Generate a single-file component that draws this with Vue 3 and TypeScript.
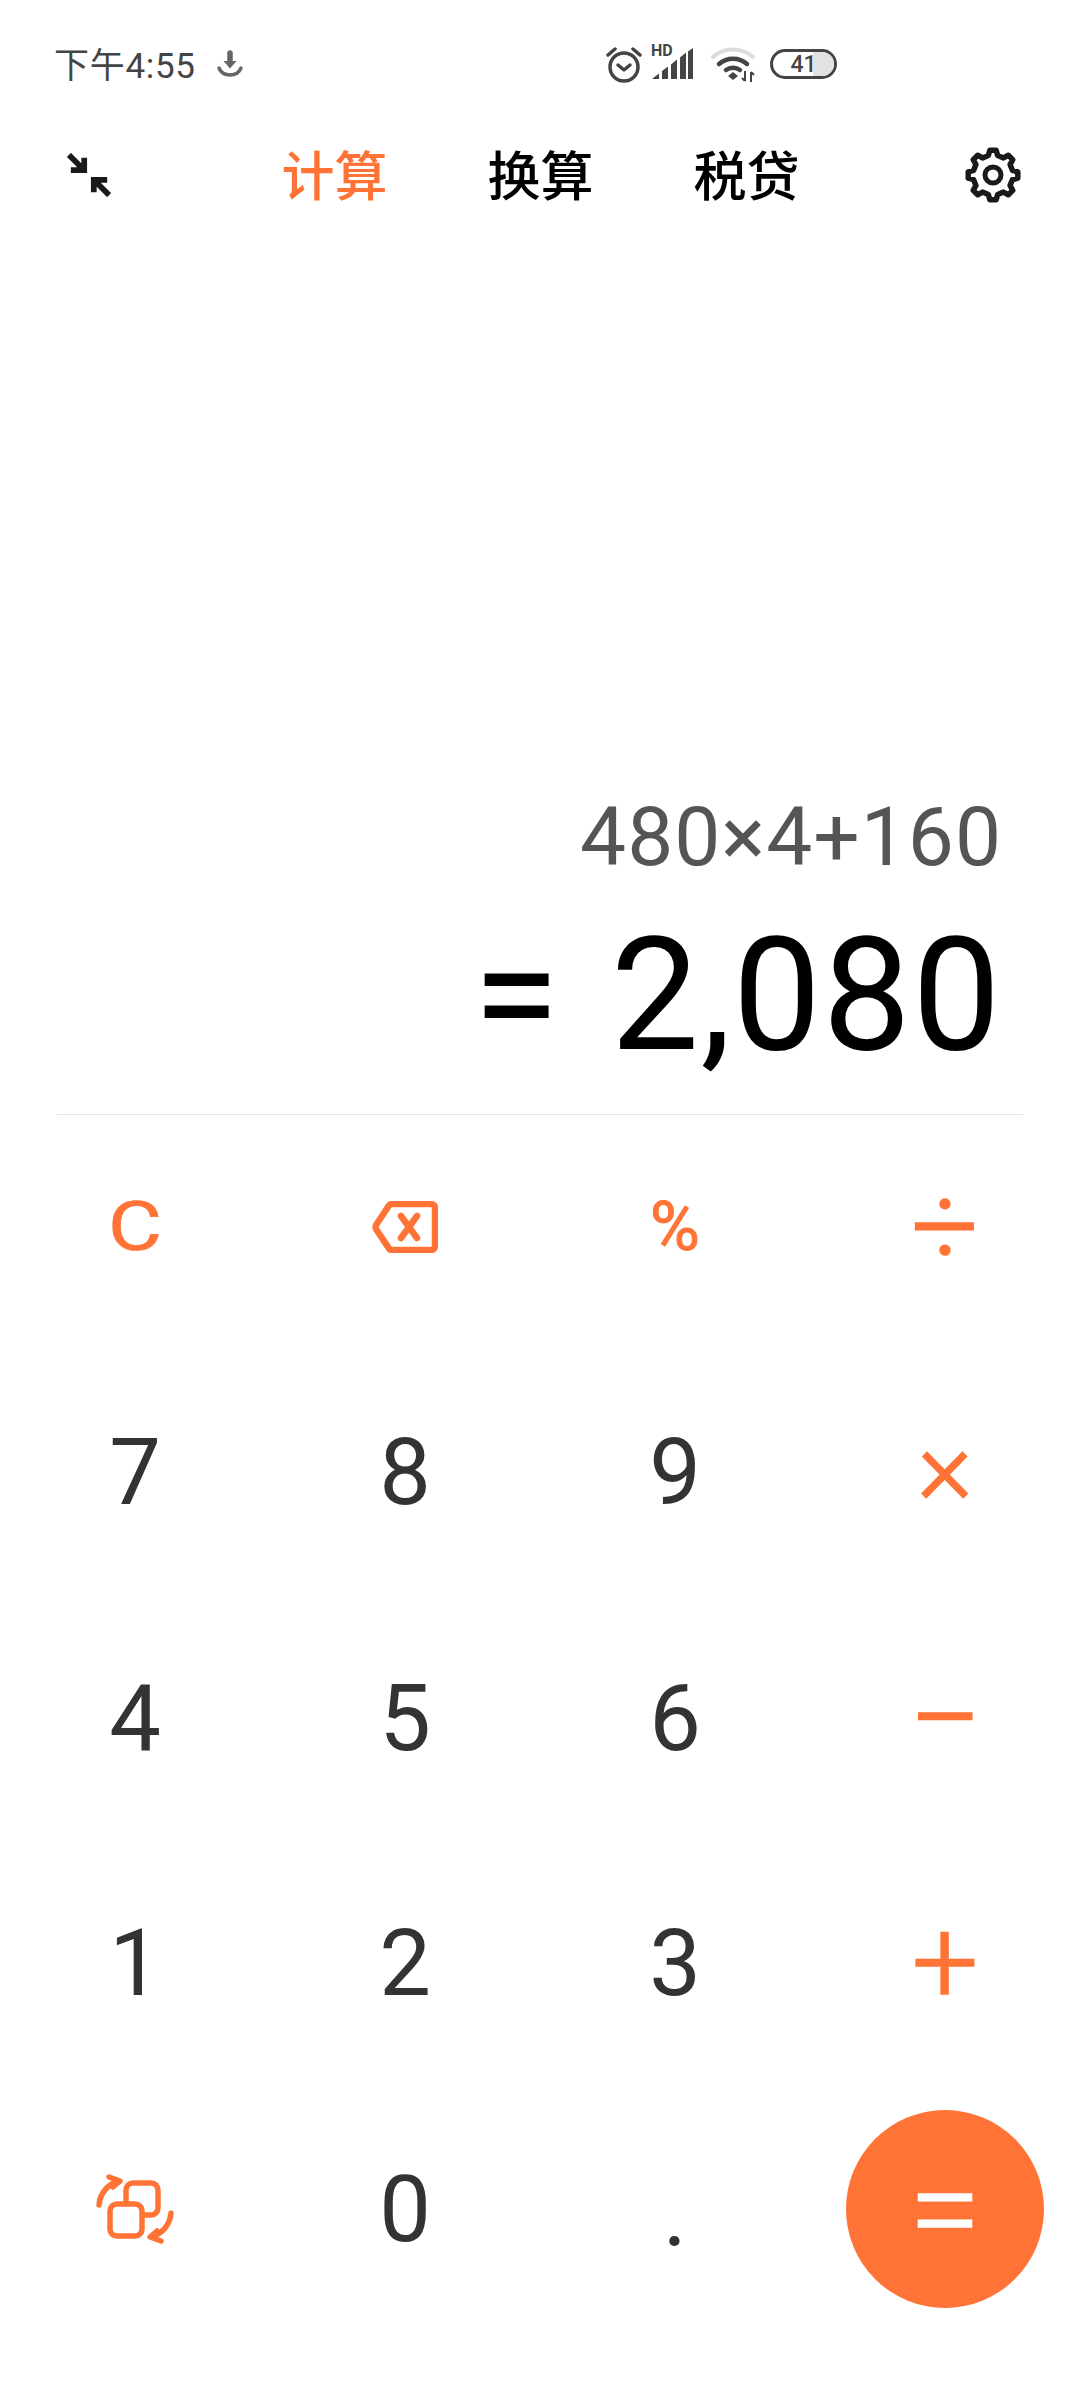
<template>
  <div class="screen">
    <!-- 状态栏 -->
    <div class="status">
      <div class="status-left">
        <span class="clock">下午4:55</span>
        <svg class="dl" viewBox="0 0 28 28" width="28" height="28" aria-hidden="true">
          <path d="M14 3v9" stroke="#666" stroke-width="5.500" fill="none" stroke-linecap="round" />
          <path d="M7.500 11h13L14 18.500z" fill="#666" />
          <path d="M3 18c2 5 6 7 11 7s9-2 11-7" stroke="#666" stroke-width="3.500" fill="none" stroke-linecap="round" />
        </svg>
      </div>
      <div class="status-right">
        <svg viewBox="0 0 36 38" width="36" height="38" aria-hidden="true">
          <circle cx="18" cy="22" r="14" stroke="#444" stroke-width="3.500" fill="none" />
          <path d="M12 20l6 5 6-5" stroke="#444" stroke-width="3.500" fill="none" stroke-linecap="round" stroke-linejoin="round" />
          <path d="M2 10l7-6M34 10l-7-6" stroke="#444" stroke-width="3.500" fill="none" stroke-linecap="round" />
        </svg>
        <div class="signal">
          <span class="hd">HD</span>
          <svg viewBox="0 0 42 32" width="42" height="32" aria-hidden="true">
            <path d="M1 31l7-5.500V31zM11 23l6-4.500V31h-6zM20 16.500l6-5V31h-6zM29 9.500l6-5V31h-6zM37 3.500L42 0v31h-5z" fill="#444" />
          </svg>
        </div>
        <svg viewBox="0 0 44 38" width="44" height="38" aria-hidden="true">
          <path d="M2 12c11-10 29-10 40 0" stroke="#dcdcdc" stroke-width="4" fill="none" stroke-linecap="round" />
          <path d="M8 19c8-7 20-7 28 0" stroke="#444" stroke-width="4.500" fill="none" stroke-linecap="round" />
          <path d="M15 25c4-3 10-3 14 0" stroke="#444" stroke-width="4.500" fill="none" stroke-linecap="round" />
          <path d="M17 31l5-4 5 4-5 4z" fill="#444" />
          <path d="M34 26v10M31 33l3 3M40 37V27M40 27l3 3" stroke="#444" stroke-width="2" fill="none" />
        </svg>
        <div class="battery">
          <div class="battery-fill"></div>
          <span class="battery-num">41</span>
        </div>
      </div>
    </div>

    <!-- 顶部导航 -->
    <div class="nav">
      <svg class="shrink" viewBox="0 0 46 46" width="44" height="44" aria-hidden="true">
        <path d="M2 2l16 16M18 5v13H4" stroke="#1a1a1a" stroke-width="6" fill="none" />
        <path d="M44 44L28 28M28 41V28h14" stroke="#1a1a1a" stroke-width="6" fill="none" />
      </svg>
      <div class="tabs">
        <span v-for="(t, i) in tabs" :key="t" class="tab" :class="{ active: i === 0 }">{{ t }}</span>
      </div>
      <svg class="gear" viewBox="-30 -30 60 60" width="60" height="60" aria-hidden="true">
        <path :d="gearPath" stroke="#1a1a1a" stroke-width="5.500" stroke-linejoin="round" fill="none" />
        <circle cx="0" cy="0" r="8" stroke="#1a1a1a" stroke-width="5" fill="none" />
      </svg>
    </div>

    <!-- 显示区域 -->
    <div class="display">
      <div class="expr">480×4+160</div>
      <div class="result"><span class="eq">=</span>2,080</div>
    </div>
    <div class="divider"></div>

    <!-- 键盘 -->
    <div class="keypad">
      <div v-for="k in keys" :key="k.label" class="key" :class="k.kind">
        <svg v-if="k.label === 'back'" viewBox="0 0 66 52" width="66" height="52" aria-hidden="true">
          <path d="M20 3h39a4 4 0 0 1 4 4v38a4 4 0 0 1-4 4H20a4 4 0 0 1-3.600-2.400L4 28a5 5 0 0 1 0-4L16.400 5.400A4 4 0 0 1 20 3z" stroke="#ff7436" stroke-width="6.500" fill="none" />
          <path d="M29 15l16 22M45 15L29 37" stroke="#ff7436" stroke-width="6.500" fill="none" stroke-linecap="round" />
        </svg>
        <svg v-else-if="k.label === 'swap'" viewBox="0 0 78 70" width="78" height="70" aria-hidden="true">
          <rect x="30" y="9" width="32" height="32" rx="7" stroke="#ff7436" stroke-width="5.500" fill="none" />
          <rect x="14" y="30" width="32" height="32" rx="7" stroke="#ff7436" stroke-width="5.500" fill="#fff" />
          <path d="M3 31c1-12 9-21 20-24M13 3l11 4-7 6" stroke="#ff7436" stroke-width="5.500" fill="none" stroke-linecap="round" stroke-linejoin="round" />
          <path d="M75 39c-1 12-9 21-20 24M65 67l-11-4 7-6" stroke="#ff7436" stroke-width="5.500" fill="none" stroke-linecap="round" stroke-linejoin="round" />
        </svg>
        <span v-else>{{ k.label }}</span>
      </div>
    </div>
  </div>
</template>

<script setup lang="ts">
interface Key {
  label: string
  kind: string
}

const tabs = ['计算', '换算', '税贷']

const keys: Key[] = [
  { label: 'C', kind: 'op clear' },
  { label: 'back', kind: 'op' },
  { label: '%', kind: 'op percent' },
  { label: '÷', kind: 'op sign divide' },
  { label: '7', kind: 'num' },
  { label: '8', kind: 'num' },
  { label: '9', kind: 'num' },
  { label: '×', kind: 'op sign times' },
  { label: '4', kind: 'num' },
  { label: '5', kind: 'num' },
  { label: '6', kind: 'num' },
  { label: '−', kind: 'op sign minus' },
  { label: '1', kind: 'num' },
  { label: '2', kind: 'num' },
  { label: '3', kind: 'num' },
  { label: '+', kind: 'op sign plus' },
  { label: 'swap', kind: 'op' },
  { label: '0', kind: 'num' },
  { label: '.', kind: 'num dot' },
  { label: '=', kind: 'equals sign' },
]

// 8 teeth, one pointing straight up
function buildGear(teeth: number, outer: number, inner: number) {
  const pts: string[] = []
  const step = (Math.PI * 2) / teeth
  for (let i = 0; i < teeth; i++) {
    const a = i * step - Math.PI / 2
    const corners: [number, number][] = [
      [a - step * 0.3, inner],
      [a - step * 0.16, outer],
      [a + step * 0.16, outer],
      [a + step * 0.3, inner],
    ]
    for (const [ang, r] of corners) {
      pts.push(`${(Math.cos(ang) * r).toFixed(2)} ${(Math.sin(ang) * r).toFixed(2)}`)
    }
  }
  return `M${pts.join('L')}z`
}

const gearPath = buildGear(8, 25, 20)
</script>

<style>
html,
body {
  background: #fff;
}
</style>

<style scoped>
.screen {
  width: 1080px;
  height: 2400px;
  background: #fff;
  display: flex;
  flex-direction: column;
  overflow: hidden;
  font-family: Roboto, 'Noto Sans CJK SC', sans-serif;
}

.status {
  height: 64px;
  margin-top: 32px;
  display: flex;
  align-items: center;
  justify-content: space-between;
  padding: 0 243px 0 54px;
  color: #444;
}
.status-left {
  display: flex;
  align-items: center;
  gap: 20px;
}
.clock {
  font-size: 35px;
  letter-spacing: 0.7px;
  padding-bottom: 3px;
}
.status-right {
  display: flex;
  align-items: center;
  gap: 15px;
}
.signal {
  position: relative;
  width: 42px;
  height: 32px;
  margin: 0 3px 0 -6px;
}
.hd {
  position: absolute;
  top: -6px;
  left: 0;
  font-size: 16px;
  line-height: 18px;
  font-weight: 700;
}
.battery {
  position: relative;
  width: 67px;
  height: 30px;
  border: 3px solid #444;
  border-radius: 15px;
  box-sizing: border-box;
  display: flex;
  align-items: center;
  justify-content: center;
  overflow: hidden;
}
.battery-fill {
  position: absolute;
  right: 0;
  top: 0;
  bottom: 0;
  width: 21px;
  background: #e2e2e2;
}
.battery-num {
  position: relative;
  font-size: 23px;
  font-weight: 500;
}

.nav {
  height: 100px;
  margin-top: 30px;
  display: flex;
  align-items: center;
  justify-content: space-between;
  padding: 0 57px 0 67px;
}
.shrink,
.gear {
  margin-bottom: 3px;
}
.tabs {
  display: flex;
  gap: 100px;
  margin-left: 7px;
}
.tab {
  font-size: 53px;
  font-weight: 500;
  color: #000;
  line-height: 62px;
  padding-top: 3px;
}
.tab.active {
  color: #ff7436;
}

.display {
  flex: 1;
  display: flex;
  flex-direction: column;
  justify-content: flex-end;
  align-items: flex-end;
  padding: 0 78px 24px 0;
}
.expr {
  font-size: 82px;
  letter-spacing: 1px;
  color: #555;
  line-height: 100px;
}
.result {
  font-size: 157px;
  letter-spacing: 1.5px;
  color: #000;
  line-height: 190px;
  margin-top: 13px;
}
.eq {
  margin-right: 50px;
}
.divider {
  height: 1px;
  margin: 0 57px;
  background: #e4e4e4;
}

.keypad {
  display: grid;
  grid-template-columns: repeat(4, 270px);
  grid-auto-rows: 200px;
  row-gap: 45.5px;
  padding: 12px 0 91px;
}
.key {
  display: flex;
  align-items: center;
  justify-content: center;
}
.num {
  font-size: 92px;
  color: #333;
}
.dot {
  padding-top: 8px;
  box-sizing: border-box;
}
.op {
  color: #ff7436;
}
.clear {
  font-size: 68px;
  transform: scaleX(1.22);
  -webkit-text-stroke: 0.6px currentColor;
}
.percent {
  font-size: 68px;
  -webkit-text-stroke: 1px currentColor;
}
.sign {
  font-weight: 300;
  -webkit-text-stroke: 1.5px currentColor;
}
.divide {
  font-size: 118px;
}
.minus {
  font-size: 130px;
}
.plus {
  font-size: 118px;
  padding-bottom: 4px;
  box-sizing: border-box;
}
.times {
  font-size: 106px;
  padding-bottom: 12px;
  box-sizing: border-box;
}
.equals {
  width: 198px;
  height: 198px;
  margin: auto;
  border-radius: 50%;
  background: #ff7436;
  color: #fff;
  font-size: 130px;
}
</style>
